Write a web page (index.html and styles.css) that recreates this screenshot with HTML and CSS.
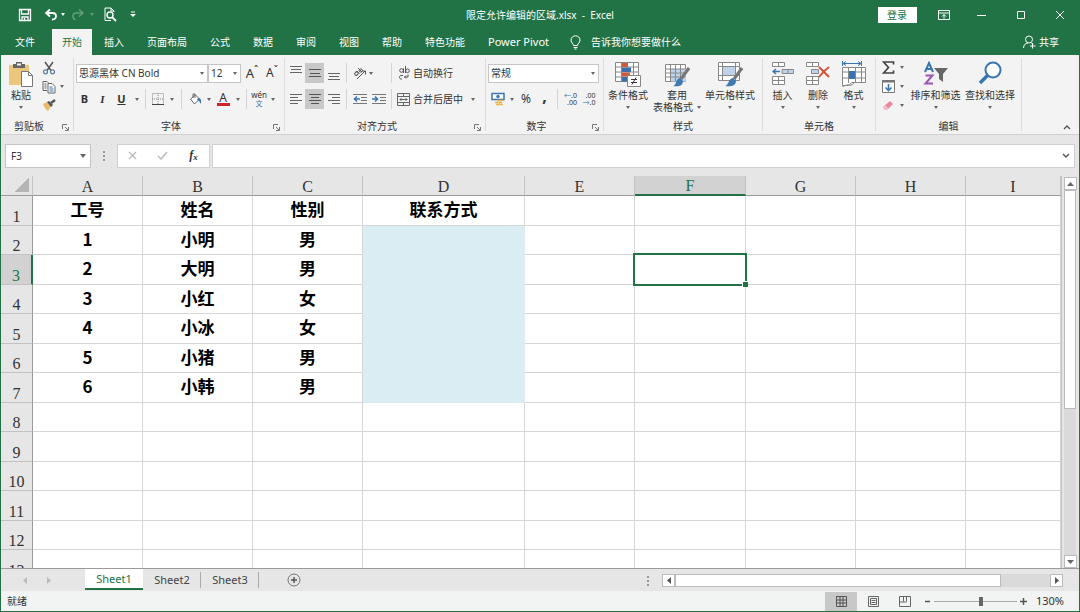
FILE: index.html
```html
<!DOCTYPE html>
<html lang="zh-CN">
<head>
<meta charset="utf-8">
<title>限定允许编辑的区域.xlsx - Excel</title>
<link rel="stylesheet" href="styles.css">
</head>
<body>
<div class="window">
  <header class="titlebar">
    <div class="quick">
      <button aria-label="保存"><svg width="14" height="14" viewBox="0 0 14 14"><path d="M1.5 1.5h11v11h-11z M3.5 1.5v4.500h7v-4.500 M4 12.500v-3.500h6v3.500 M6.500 10v2" fill="none" stroke="#fff" stroke-width="1.300"/></svg></button>
      <button aria-label="撤消"><svg width="14" height="14" viewBox="0 0 14 14"><path d="M6 1.500L2 5l4 3.500 M2 5h6.500c2 0 3.500 1 3.500 3s-1.500 3.500-4 3.500" fill="none" stroke="#fff" stroke-width="1.800"/></svg></button>
      <button class="arrow light" aria-label="撤消选项"></button>
      <button class="dim" aria-label="恢复"><svg width="14" height="14" viewBox="0 0 14 14"><path d="M8 1.500L12 5l-4 3.500 M12 5h-6.500c-2 0-3.500 1-3.500 3s1 3.500 2.500 3.500" fill="none" stroke="#fff" stroke-width="1.500"/></svg></button>
      <button class="arrow light dim" aria-label="恢复选项"></button>
      <button aria-label="打印预览"><svg width="14" height="15" viewBox="0 0 14 15"><path d="M11 5V4L8 1H2v12.500h6 M8 1v3h3" fill="none" stroke="#fff"/><circle cx="7" cy="8" r="3" fill="none" stroke="#fff" stroke-width="1.400"/><path d="M9 10l4 4" stroke="#fff" stroke-width="1.800"/></svg></button>
      <button aria-label="自定义快速访问工具栏"><svg width="6" height="7" viewBox="0 0 6 7"><path d="M1 1h4" stroke="#fff"/><path d="M0 3h6L3 6z" fill="#fff"/></svg></button>
    </div>
    <h1 class="doc">限定允许编辑的区域.xlsx&nbsp; -&nbsp; Excel</h1>
    <div class="wincontrols">
      <button class="login">登录</button>
      <button aria-label="功能区显示选项"><svg width="12" height="10" viewBox="0 0 12 10"><path d="M.500.500h11v9h-11z M.500 3h11 M6 8.500v-4 M4 6.500l2-2 2 2" fill="none" stroke="#fff"/></svg></button>
      <button aria-label="最小化"><svg width="10" height="10" viewBox="0 0 10 10"><path d="M0 5.500h9" stroke="#fff"/></svg></button>
      <button aria-label="最大化"><svg width="10" height="10" viewBox="0 0 10 10"><path d="M1.500 1.500h7v7h-7z" fill="none" stroke="#fff"/></svg></button>
      <button aria-label="关闭"><svg width="10" height="10" viewBox="0 0 10 10"><path d="M1 1l8 8M9 1l-8 8" stroke="#fff"/></svg></button>
    </div>
  </header>
  <nav class="tabs">
    <button class="file">文件</button><button class="active">开始</button><button>插入</button><button>页面布局</button><button>公式</button><button>数据</button><button>审阅</button><button>视图</button><button>帮助</button><button>特色功能</button><button class="latin">Power Pivot</button>
    <button class="tell"><svg width="11" height="15" viewBox="0 0 11 15"><path d="M3.500 10.500C3.500 8.500 1 8 1 5a4.500 4.200 0 0 1 9 0c0 3-2.500 3.500-2.500 5.500z M3.500 12.500h4 M4.500 14h2" fill="none" stroke="#fff"/></svg>告诉我你想要做什么</button>
    <button class="share"><svg width="13" height="14" viewBox="0 0 13 14"><circle cx="6" cy="4.500" r="3.500" fill="none" stroke="#fff"/><path d="M.500 13c0-3 2-5 4.500-5 M8 7.500l2 2 M9.500 8v5.500 M7 11h5.500" fill="none" stroke="#fff"/></svg>共享</button>
  </nav>

  <section class="ribbon">
    <div class="group clipboard">
      <div class="content">
        <button class="big"><svg width="26" height="27" viewBox="0 0 26 27"><path d="M1 4h20v20H1z" fill="#ecc67c"/><path d="M5 3h3V1h6v2h3v4H5z" fill="#666"/><path d="M9 2.500h4v2H9z" fill="#f3f3f3"/><path d="M13.500 10.500h7l4 4v11h-11z" fill="#fff" stroke="#777"/><path d="M20.500 10.500v4h4" fill="none" stroke="#777"/></svg><span>粘贴</span><i class="arrow"></i></button>
        <div class="stack">
          <button aria-label="剪切"><svg width="14" height="14" viewBox="0 0 14 14"><path d="M3 1l6 8.500M11 1L5 9.500" stroke="#555" stroke-width="1.500"/><circle cx="3.500" cy="10.800" r="2" fill="none" stroke="#5b7f9f" stroke-width="1.200"/><circle cx="10.500" cy="10.800" r="2" fill="none" stroke="#5b7f9f" stroke-width="1.200"/></svg></button><span></span>
          <button aria-label="复制"><svg width="14" height="14" viewBox="0 0 14 14"><path d="M5 10.500H1V1.500h4l2 2M2.500 4h2M2.500 6h2M2.500 8h2" fill="none" stroke="#666"/><path d="M6 3.500h4l3 3v6.500H6z" fill="#fff" stroke="#666"/><path d="M7.500 7h3M7.500 9h4M7.500 11h4" stroke="#3975b0"/></svg></button><button class="arrow" aria-label="复制选项"></button>
          <button aria-label="格式刷"><svg width="14" height="13" viewBox="0 0 14 13"><path d="M1 5l4-2 4 4-3 5C4 11 2 8 1 5z" fill="#ebba68"/><path d="M5 3l2-1 4 4-2 2z" fill="#555"/><path d="M9 4l4-3" stroke="#555" stroke-width="2.500"/></svg></button><span></span>
        </div>
      </div>
      <div class="label"><span>剪贴板</span><button class="launch" aria-label="剪贴板设置"><svg width="7" height="7" viewBox="0 0 7 7"><path d="M.500 5V.500H5M3 3l3 3M6.500 3v3.500H3" fill="none" stroke="#777"/></svg></button></div>
    </div>

    <div class="group font">
      <div class="content rows">
        <div class="row one">
          <span class="select"><select aria-label="字体"><option>思源黑体 CN Bold</option></select></span>
          <span class="select"><select aria-label="字号"><option>12</option></select></span>
          <button class="grow" aria-label="增大字号"><span>A</span><sup>ˆ</sup></button>
          <button class="shrink" aria-label="减小字号"><span>A</span><sup>ˇ</sup></button>
        </div>
        <div class="row two">
          <button><b>B</b></button><button class="ital">I</button><button><u>U</u></button><button class="arrow" aria-label="下划线选项"></button><i class="sep"></i>
          <button aria-label="边框"><svg width="12" height="12" viewBox="0 0 12 12"><path d="M.500.500h11v11h-11z M6 0v12M0 6h12" fill="none" stroke="#888" stroke-dasharray="1 1"/><path d="M0 11.500h12" stroke="#444"/></svg></button><button class="arrow" aria-label="边框选项"></button><i class="sep"></i>
          <button aria-label="填充颜色"><svg width="13" height="12" viewBox="0 0 13 12"><path d="M1.500 6l5-4 4 4-5 5z" fill="#fff" stroke="#666"/><path d="M4 5V1h2v4" fill="none" stroke="#666"/><path d="M9 5c3 0 4 3 2.500 6C11 9 10 7 8 7z" fill="#3975b0"/></svg></button><button class="arrow" aria-label="填充选项"></button>
          <button class="fontcolor" aria-label="字体颜色">A</button><button class="arrow" aria-label="颜色选项"></button><i class="sep"></i>
          <button class="pinyin"><span>wén</span><span class="wen">文</span></button><button class="arrow" aria-label="拼音选项"></button>
        </div>
      </div>
      <div class="label"><span>字体</span><button class="launch" aria-label="字体设置"><svg width="7" height="7" viewBox="0 0 7 7"><path d="M.500 5V.500H5M3 3l3 3M6.500 3v3.500H3" fill="none" stroke="#777"/></svg></button></div>
    </div>

    <div class="group align">
      <div class="content rows">
        <div class="row">
          <button class="up" aria-label="顶端对齐"><svg width="12" height="12" viewBox="0 0 12 12"><path d="M0 1.500h12M1 4.500h10M0 7.500h12" stroke="#666"/></svg></button>
          <button class="on" aria-label="垂直居中"><svg width="12" height="12" viewBox="0 0 12 12"><path d="M0 2.500h12M1 6.500h10M0 9.500h12" stroke="#555"/></svg></button>
          <button class="down" aria-label="底端对齐"><svg width="12" height="12" viewBox="0 0 12 12"><path d="M0 4.500h12M1 7.500h10M0 10.500h12" stroke="#666"/></svg></button><i class="sep"></i>
          <button aria-label="方向"><svg width="14" height="13" viewBox="0 0 14 13"><g fill="none" stroke="#555"><ellipse cx="3.500" cy="6.500" rx="2" ry="1.500" transform="rotate(-45 3.500 6.500)"/><path d="M3.500 4l3 3M5 1l4 4"/><circle cx="7.800" cy="3.500" r="1.600"/><path d="M4 12l8-8M9 4h3.500v3.500"/></g></svg></button><button class="arrow start" aria-label="方向选项"></button><i class="sep"></i>
          <button class="wide"><svg width="14" height="14" viewBox="0 0 14 14"><g fill="none" stroke="#555"><circle cx="4.500" cy="4.500" r="1.800"/><path d="M6.500 2.500v4.500M8.500 0v7M6 9.500H4c-2 0-2 3.500 0 3.500h1M11 8.500v2.500H7.500M9 9.500L7.500 11 9 12.500"/><circle cx="10.500" cy="4.800" r="1.800"/></g></svg>自动换行</button>
        </div>
        <div class="row">
          <button aria-label="左对齐"><svg width="12" height="12" viewBox="0 0 12 12"><path d="M0 1.500h12M0 4.500h8M0 7.500h12M0 10.500h8" stroke="#666"/></svg></button>
          <button class="on" aria-label="居中"><svg width="12" height="12" viewBox="0 0 12 12"><path d="M0 1.500h12M2 4.500h8M0 7.500h12M2 10.500h8" stroke="#555"/></svg></button>
          <button aria-label="右对齐"><svg width="12" height="12" viewBox="0 0 12 12"><path d="M0 1.500h12M4 4.500h8M0 7.500h12M4 10.500h8" stroke="#666"/></svg></button><i class="sep"></i>
          <button aria-label="减少缩进"><svg width="14" height="12" viewBox="0 0 14 12"><path d="M0 1.500h14M8 4.500h6M8 7.500h6M0 10.500h14" stroke="#777"/><path d="M1 6h6M4 3.500L1.500 6 4 8.500" fill="none" stroke="#3975b0" stroke-width="1.500"/></svg></button>
          <button aria-label="增加缩进"><svg width="14" height="12" viewBox="0 0 14 12"><path d="M0 1.500h14M8 4.500h6M8 7.500h6M0 10.500h14" stroke="#777"/><path d="M0 6h6M3 3.500L5.500 6 3 8.500" fill="none" stroke="#3975b0" stroke-width="1.500"/></svg></button><i class="sep"></i>
          <span class="split"><button class="wide"><svg width="14" height="13" viewBox="0 0 14 13"><path d="M.500.500h12v12H.500z M.500 3.500h12M.500 9.500h12M6.500.500v3M6.500 9.500v3 M3 6.500h7M4.500 5L3 6.500 4.500 8M8.500 5L10 6.500 8.500 8" fill="none" stroke="#666"/></svg>合并后居中</button><button class="arrow" aria-label="合并选项"></button></span>
        </div>
      </div>
      <div class="label"><span>对齐方式</span><button class="launch" aria-label="对齐设置"><svg width="7" height="7" viewBox="0 0 7 7"><path d="M.500 5V.500H5M3 3l3 3M6.500 3v3.500H3" fill="none" stroke="#777"/></svg></button></div>
    </div>

    <div class="group number">
      <div class="content rows">
        <div class="row one"><span class="select"><select aria-label="数字格式"><option>常规</option></select></span></div>
        <div class="row two">
          <button aria-label="会计数字格式"><svg width="14" height="14" viewBox="0 0 14 14"><path d="M1 1.500h12v6H1z" fill="#fff" stroke="#3975b0" stroke-width="1.500"/><circle cx="7" cy="4.500" r="1.700" fill="#3975b0"/><path d="M6 8.500h7M4 10.500h7M5 12.500h7" stroke="#e9b54f" stroke-width="1.600"/></svg></button><button class="arrow" aria-label="货币选项"></button>
          <button class="pct">%</button><button class="comma">,</button><i class="sep"></i>
          <button class="dec" aria-label="增加小数位数"><span><em>←</em>.0</span><span>.00</span></button><button class="dec" aria-label="减少小数位数"><span>.00</span><span><em>→</em>.0</span></button>
        </div>
      </div>
      <div class="label"><span>数字</span><button class="launch" aria-label="数字设置"><svg width="7" height="7" viewBox="0 0 7 7"><path d="M.500 5V.500H5M3 3l3 3M6.500 3v3.500H3" fill="none" stroke="#777"/></svg></button></div>
    </div>

    <div class="group styles">
      <div class="content">
        <button class="big"><svg width="26" height="27" viewBox="0 0 26 27"><path d="M.500 1.500h23v19H.500z M.500 6h23M.500 11h23M.500 16h23M6.500 1v19M18.500 1v19" fill="#fff" stroke="#888"/><path d="M7 2h6v4H7zM7 11.500h8v4H7z" fill="#d0593d"/><path d="M7 6.500h9v4.500H7zM7 16h5v4.500H7z" fill="#3f6faa"/><path d="M12.500 14.500h13v11h-13z" fill="#fff" stroke="#888"/><path d="M16 18.500h6M16 21.500h6M21 16.500l-4 7" stroke="#333"/></svg><span>条件格式</span><i class="arrow"></i></button>
        <button class="big"><svg width="26" height="27" viewBox="0 0 26 27"><path d="M1.500 3.500h20v17h-20z" fill="#fff" stroke="#888"/><path d="M7 8h15v12.500H7z" fill="#bed3ea"/><path d="M1.500 8h20M1.500 12h20M1.500 16h20M6.500 3v17M11.500 3v17M16.500 3v17" stroke="#888"/><path d="M25 7L17 18" stroke="#777" stroke-width="3"/><path d="M9 25c4-1 2-7 7-8l3 3c0 5-5 6-10 5z" fill="#3f7ab5"/></svg><span>套用</span><span class="inline">表格格式 <i class="arrow"></i></span></button>
        <button class="big"><svg width="26" height="27" viewBox="0 0 26 27"><path d="M1.500 1.500h21v18h-21z" fill="#fff" stroke="#888"/><path d="M6 6h12v8H6z" fill="#bed3ea"/><path d="M1.500 5.500h21M1.500 14.500h21M5.500 1v18M18.500 1v18" stroke="#888"/><path d="M25 7L17 18" stroke="#777" stroke-width="3"/><path d="M8 25c4-1 3-7 8-8l3 3c0 5-6 6-11 5z" fill="#3f7ab5"/></svg><span>单元格样式</span><i class="arrow"></i></button>
      </div>
      <div class="label"><span>样式</span></div>
    </div>

    <div class="group cells">
      <div class="content">
        <button class="big"><svg width="24" height="27" viewBox="0 0 24 27"><path d="M1.500 1.500h12v4h-12zM7.500 1.500v4M1.500 15.500h12v8h-12zM7.500 15.500v8M1.500 19.500h12" fill="#fff" stroke="#888"/><path d="M11 8.500h11.500v4H11zM17 8.500v4" fill="#bed3ea" stroke="#888"/><path d="M2 10.500h7M5 8l-3 2.500L5 13" fill="none" stroke="#3975b0" stroke-width="1.300"/></svg><span>插入</span><i class="arrow"></i></button>
        <button class="big"><svg width="26" height="27" viewBox="0 0 26 27"><path d="M1.500 1.500h12v4h-12zM7.500 1.500v4M1.500 15.500h12v8h-12zM7.500 15.500v8M1.500 19.500h12" fill="#fff" stroke="#888"/><path d="M6.500 8.500h7v4h-7z" fill="#bed3ea" stroke="#888"/><path d="M14 6l10 10M24 6c-4 3-7 6-10 10" fill="none" stroke="#d2533a" stroke-width="2"/></svg><span>删除</span><i class="arrow"></i></button>
        <button class="big"><svg width="26" height="27" viewBox="0 0 26 27"><path d="M1.500 0v5M20.500 0v5M3 2.500h16M5 .500l-3 2 3 2M17 .500l3 2-3 2" fill="none" stroke="#3975b0"/><path d="M1.500 6.500h23v15H11l-4 3H1.500z M1.500 11h23M1.500 17h23M7.500 6v16M14.500 6v16M20.500 6v16" fill="#fff" stroke="#888"/><path d="M8 10h6v8H8z" fill="#3975b0"/><path d="M1 25c3 1 4-2 7-1s4-1 5-2" fill="none" stroke="#888"/></svg><span>格式</span><i class="arrow"></i></button>
      </div>
      <div class="label"><span>单元格</span></div>
    </div>

    <div class="group edit">
      <div class="content">
        <div class="stack">
          <button aria-label="自动求和"><svg width="13" height="13" viewBox="0 0 13 13"><path d="M11.500 3.500V1H1.500l5 5.500-5 5.500h10V9.500" fill="none" stroke="#444" stroke-width="1.700"/></svg></button><button class="arrow" aria-label="求和选项"></button>
          <button aria-label="填充"><svg width="13" height="13" viewBox="0 0 13 13"><path d="M.500.500h12v12H.500z" fill="#fff" stroke="#777"/><path d="M0 1.500h13" stroke="#777" stroke-width="2"/><path d="M6.500 4v6M3.500 7.500l3 3 3-3" fill="none" stroke="#3975b0" stroke-width="1.600"/></svg></button><button class="arrow" aria-label="填充选项"></button>
          <button aria-label="清除"><svg width="13" height="11" viewBox="0 0 13 11"><path d="M1 7l7-6 3 3-6 6H3z" fill="#e8899b"/><path d="M1 7l2-2 3.500 3.500L5 10H3z" fill="#f4bdc6"/></svg></button><button class="arrow" aria-label="清除选项"></button>
        </div>
        <button class="big"><svg width="26" height="27" viewBox="0 0 26 27"><g fill="none" stroke-width="2"><path d="M2 11L6 2l4 9M3.500 8h5" stroke="#3975b0"/><path d="M2.500 14.500h7l-7 8h7.500" stroke="#9a55b5"/></g><path d="M11 7h14l-5 6v8l-4-3v-5z" fill="#666"/></svg><span>排序和筛选</span><i class="arrow"></i></button>
        <button class="big"><svg width="26" height="27" viewBox="0 0 26 27"><circle cx="16" cy="9" r="7.500" fill="#fff" stroke="#3975b0" stroke-width="2"/><path d="M10.500 14.500L3 22" stroke="#3975b0" stroke-width="3.500"/></svg><span>查找和选择</span><i class="arrow"></i></button>
      </div>
      <div class="label"><span>编辑</span></div>
    </div>
    <button class="collapse" aria-label="折叠功能区"><svg width="8" height="6" viewBox="0 0 8 6"><path d="M1 5l3-3 3 3" fill="none" stroke="#555" stroke-width="1.400"/></svg></button>
  </section>

  <section class="formula">
    <span class="select namebox"><input aria-label="名称框" value="F3"></span>
    <i class="dots"></i>
    <div class="fx">
      <button aria-label="取消"><svg width="9" height="9" viewBox="0 0 9 9"><path d="M1 1l7 7M8 1L1 8" stroke="#bbb" stroke-width="1.300"/></svg></button>
      <button aria-label="输入"><svg width="11" height="9" viewBox="0 0 11 9"><path d="M1 5l3 3 6-7" fill="none" stroke="#bbb" stroke-width="1.500"/></svg></button>
      <button class="fxb">f<sub>x</sub></button>
    </div>
    <div class="fbar"><input aria-label="编辑栏"><button aria-label="展开编辑栏"><svg width="8" height="6" viewBox="0 0 8 6"><path d="M1 1l3 3 3-3" fill="none" stroke="#555" stroke-width="1.400"/></svg></button></div>
  </section>

  <main class="sheet">
    <div class="cellsarea">
      <table>
        <colgroup><col class="h"><col class="n"><col class="n"><col class="n"><col class="d"><col class="n"><col class="f"><col class="n"><col class="n"><col></colgroup>
        <thead><tr><th class="corner"></th><th>A</th><th>B</th><th>C</th><th>D</th><th>E</th><th class="cur">F</th><th>G</th><th>H</th><th>I</th></tr></thead>
        <tbody>
          <tr><th>1</th><td>工号</td><td>姓名</td><td>性别</td><td>联系方式</td><td></td><td></td><td></td><td></td><td></td></tr>
          <tr><th>2</th><td>1</td><td>小明</td><td>男</td><td class="fill"></td><td></td><td></td><td></td><td></td><td></td></tr>
          <tr><th class="cur">3</th><td>2</td><td>大明</td><td>男</td><td class="fill"></td><td></td><td class="picked"></td><td></td><td></td><td></td></tr>
          <tr><th>4</th><td>3</td><td>小红</td><td>女</td><td class="fill"></td><td></td><td></td><td></td><td></td><td></td></tr>
          <tr><th>5</th><td>4</td><td>小冰</td><td>女</td><td class="fill"></td><td></td><td></td><td></td><td></td><td></td></tr>
          <tr><th>6</th><td>5</td><td>小猪</td><td>男</td><td class="fill"></td><td></td><td></td><td></td><td></td><td></td></tr>
          <tr><th>7</th><td>6</td><td>小韩</td><td>男</td><td class="fill"></td><td></td><td></td><td></td><td></td><td></td></tr>
          <tr><th>8</th><td></td><td></td><td></td><td></td><td></td><td></td><td></td><td></td><td></td></tr>
          <tr><th>9</th><td></td><td></td><td></td><td></td><td></td><td></td><td></td><td></td><td></td></tr>
          <tr><th>10</th><td></td><td></td><td></td><td></td><td></td><td></td><td></td><td></td><td></td></tr>
          <tr><th>11</th><td></td><td></td><td></td><td></td><td></td><td></td><td></td><td></td><td></td></tr>
          <tr><th>12</th><td></td><td></td><td></td><td></td><td></td><td></td><td></td><td></td><td></td></tr>
          <tr><th>13</th><td></td><td></td><td></td><td></td><td></td><td></td><td></td><td></td><td></td></tr>
        </tbody>
      </table>
    </div>
    <div class="vscroll">
      <button aria-label="向上滚动"><svg width="7" height="4" viewBox="0 0 7 4"><path d="M0 4h7L3.500 0z" fill="#666"/></svg></button>
      <div class="thumb"></div><div class="track"></div>
      <button aria-label="向下滚动"><svg width="7" height="4" viewBox="0 0 7 4"><path d="M0 0h7L3.500 4z" fill="#666"/></svg></button>
    </div>
  </main>

  <footer class="sheetbar">
    <div class="navs"><button aria-label="上一张"><svg width="4" height="7" viewBox="0 0 4 7"><path d="M4 0v7L0 3.500z" fill="#bbb"/></svg></button><button aria-label="下一张"><svg width="4" height="7" viewBox="0 0 4 7"><path d="M0 0v7l4-3.500z" fill="#bbb"/></svg></button></div>
    <button class="st active">Sheet1</button><button class="st">Sheet2</button><button class="st">Sheet3</button>
    <button class="add" aria-label="新工作表"><svg width="14" height="14" viewBox="0 0 14 14"><circle cx="7" cy="7" r="6" fill="none" stroke="#777"/><path d="M7 4v6M4 7h6" stroke="#555" stroke-width="1.500"/></svg></button>
    <i class="dots"></i>
    <div class="hscroll">
      <button aria-label="向左滚动"><svg width="4" height="7" viewBox="0 0 4 7"><path d="M4 0v7L0 3.500z" fill="#555"/></svg></button>
      <div class="thumb"></div><div class="track"></div>
      <button aria-label="向右滚动"><svg width="4" height="7" viewBox="0 0 4 7"><path d="M0 0v7l4-3.500z" fill="#555"/></svg></button>
    </div>
  </footer>
  <footer class="status">
    <span class="ready">就绪</span>
    <button class="on" aria-label="普通"><svg width="11" height="11" viewBox="0 0 11 11"><path d="M.500.500h10v10H.500z M.500 4h10M.500 7h10M4 .500v10M7 .500v10" fill="none" stroke="#555"/></svg></button>
    <button aria-label="页面布局"><svg width="11" height="11" viewBox="0 0 11 11"><path d="M.500.500h10v10H.500z M2.500 2.500h6v6h-6z M3.500 4.500h4M3.500 6.500h4" fill="none" stroke="#666"/></svg></button>
    <button aria-label="分页预览"><svg width="12" height="11" viewBox="0 0 12 11"><path d="M.500.500h11v10H.500z M4.500.500v5M7.500.500v5M.500 6h7" fill="none" stroke="#666"/></svg></button>
    <button class="sm" aria-label="缩小"><svg width="7" height="7" viewBox="0 0 7 7"><path d="M1 3.500h5" stroke="#555" stroke-width="1.500"/></svg></button>
    <input type="range" min="10" max="220" value="130" aria-label="显示比例">
    <button class="sm" aria-label="放大"><svg width="7" height="7" viewBox="0 0 7 7"><path d="M0 3.500h7M3.500 0v7" stroke="#555" stroke-width="1.500"/></svg></button>
    <button class="zoom">130%</button>
  </footer>
</div>
</body>
</html>
```
FILE: styles.css
```css
* { box-sizing: border-box; }
body {
  margin: 0;
  font: 10px/14px "Noto Sans", "Noto Sans CJK SC", sans-serif;
  color: #333;
}
button, input, select { font: inherit; color: inherit; }
button {
  display: flex;
  align-items: center;
  justify-content: center;
  padding: 0;
  border: 0;
  background: none;
  white-space: nowrap;
}
svg { display: block; flex: none; }
i { font-style: normal; }

.window {
  display: flex;
  flex-direction: column;
  height: 100vh;
  border: solid #217346;
  border-width: 0 1px 1px;
  background: #e6e6e6;
  overflow: hidden;
}

.arrow::before {
  content: "";
  display: block;
  border: solid transparent;
  border-width: 3px 2px 0;
  border-top-color: #666;
}
.arrow.light::before { border-top-color: #fff; }
.dim { opacity: 0.3; }

/* Title bar */
.titlebar {
  display: grid;
  grid-template-columns: 1fr auto 1fr;
  align-items: center;
  height: 29px;
  background: #217346;
  color: #fff;
}
.quick {
  display: grid;
  grid-template-columns: 34px 18px 6px 24px 4px 32px 14px;
  justify-items: center;
  align-items: center;
  padding-left: 7px;
}
.doc { margin: 0; font-size: 10px; font-weight: 400; }
.wincontrols {
  display: grid;
  grid-template-columns: 40px 38px 38px 39px 39px;
  justify-content: end;
  justify-items: center;
  align-items: center;
}
.wincontrols .login {
  width: 39px;
  height: 16px;
  margin-right: 16px;
  background: #fff;
  color: #217346;
}

/* Ribbon tabs */
.tabs {
  display: flex;
  gap: 1px;
  height: 26px;
  background: #217346;
  color: #fff;
}
.tabs button { padding: 0 11px; }
.tabs .file { padding: 0 16px 0 14px; }
.tabs .active { padding: 0 10px; background: #f3f3f3; color: #217346; }
.tabs .latin { font-size: 11px; }
.tabs .tell { gap: 10px; padding-left: 9px; }
.tabs .share { gap: 3px; margin-left: auto; padding-right: 20px; }

/* Ribbon */
.ribbon {
  display: flex;
  height: 80px;
  padding: 3px 0;
  background: #f3f3f3;
  border-bottom: 1px solid #d0d0d0;
}
.group {
  display: flex;
  flex-direction: column;
  border-right: 1px solid #dcdcdc;
}
.content { display: grid; flex: 1; align-content: start; padding-top: 3px; }
.label { display: flex; height: 12px; }
.label span { flex: 1; text-align: center; }
.launch { width: 16px; padding-top: 4px; }
.clipboard { width: 73px; }
.font { width: 211px; }
.align { width: 201px; }
.number { width: 118px; }
.styles { width: 159px; }
.cells { width: 113px; }
.edit { width: 146px; }

.big { flex-direction: column; justify-content: flex-start; line-height: 12px; }
.big svg { margin-bottom: 1px; }
.big .arrow { margin-top: 5px; }
.big .inline { display: flex; align-items: center; gap: 4px; }
.big .inline .arrow { margin-top: 0; }
.stack {
  display: grid;
  grid-template-rows: repeat(3, 19px);
  align-items: center;
  justify-items: center;
}
.clipboard .content { grid-template-columns: 40px 26px; }
.clipboard .stack { grid-template-columns: 16px 10px; margin-top: -3px; }
.styles .content { grid-template-columns: 48px 50px 56px; }
.cells .content { grid-template-columns: 35px 36px 35px; padding-left: 2px; }
.edit .content { grid-template-columns: 33px 53px 56px; }
.edit .stack { grid-template-columns: 24px 4px; margin-top: -3px; }

.rows { gap: 6px; padding-top: 5px; }
.row {
  display: grid;
  grid-auto-flow: column;
  align-items: center;
  justify-items: center;
  height: 20px;
}
.font .content, .number .content { padding-left: 2px; }
.font .one { grid-template-columns: 132px 33px 22px 18px; }
.font .two { grid-template-columns: 17px 19px 19px 11px 6px 19px 10px 9px 18px 9px 20px 9px 8px 18px 10px; }
.align .content { padding-left: 2px; }
.align .row { grid-template-columns: 18px 19px 19px 7px 19px 19px 6px auto; justify-content: start; }
.number .one { grid-template-columns: 111px; }
.number .two { grid-template-columns: 19px 9px 20px 17px 8px 19px 18px; }
.sep { width: 1px; height: 20px; background: #d4d4d4; }
.start { justify-self: start; }
.on { width: 19px; height: 20px; background: #c8c8c8; }
.up { margin-bottom: 4px; }
.down { margin-top: 4px; }
.wide { gap: 2px; padding-left: 3px; }
.align .row > .wide { justify-self: start; }
.split { display: flex; gap: 8px; }

.select { position: relative; display: flex; width: 100%; height: 19px; }
.select::after {
  content: "";
  position: absolute;
  right: 4px;
  top: 8px;
  border: solid transparent;
  border-width: 3px 2px 0;
  border-top-color: #666;
  pointer-events: none;
}
.select select, .select input {
  width: 100%;
  min-width: 0;
  padding: 0 2px;
  border: 1px solid #c6c6c6;
  border-radius: 0;
  background: #fff;
  appearance: none;
}
.row b, .row u { font-size: 11px; font-weight: 700; }
.ital { font: italic 700 11px "Liberation Serif", serif; }
.grow { font-size: 13px; }
.shrink { font-size: 12px; }
.row sup { font-size: 10px; line-height: 1; margin-bottom: 6px; }
.fontcolor {
  height: 13px;
  width: 13px;
  border-bottom: 3px solid #d2232a;
  font-size: 12px;
  line-height: 10px;
}
.pinyin { flex-direction: column; font-size: 8px; line-height: 9px; }
.pinyin .wen { color: #3975b0; font-size: 7px; }
.pct { font-size: 12px; }
.comma { font-size: 16px; font-weight: 700; padding-bottom: 6px; }
.dec { flex-direction: column; align-items: flex-end; font-size: 7px; line-height: 7px; }
.dec em { font-style: normal; color: #3975b0; }
.collapse { align-self: flex-end; margin-left: auto; padding: 0 8px 1px; }

/* Formula bar */
.formula {
  display: flex;
  align-items: center;
  height: 41px;
  padding: 0 4px;
}
.formula .select { width: 86px; height: 24px; }
.formula .select::after { right: 5px; top: 10px; border-width: 4px 3px 0; }
.formula .select input { padding: 0 5px; }
.dots { width: 2px; height: 10px; background: repeating-linear-gradient(#999 0 2px, transparent 2px 4px); }
.formula .dots { margin: 0 12px; }
.fx {
  display: grid;
  grid-template-columns: 29px 31px 31px;
  height: 24px;
  margin-right: 2px;
  border: 1px solid #d0d0d0;
  background: #fff;
}
.fxb { font: italic 700 12px "Liberation Serif", serif; }
.fxb sub { font-size: 9px; line-height: 1; margin-top: 3px; }
.fbar { display: flex; flex: 1; height: 24px; border: 1px solid #d0d0d0; background: #fff; }
.fbar input { flex: 1; min-width: 0; border: 0; background: none; }
.fbar button { width: 16px; }

/* Worksheet */
.sheet { display: flex; flex: 1; min-height: 0; border-bottom: 1px solid #9a9a9a; }
.cellsarea { flex: 1; min-width: 0; overflow: hidden; }
table { width: 100%; table-layout: fixed; border-collapse: separate; border-spacing: 0; }
.h { width: 32px; }
.n { width: 110px; }
.d { width: 162px; }
.f { width: 111px; }
th {
  padding: 0;
  background: #e6e6e6;
  font: 400 16px/16px "Liberation Serif", serif;
  color: #333;
}
thead th { height: 20px; border-right: 1px solid #c2c2c2; border-bottom: 1px solid #9a9a9a; vertical-align: bottom; }
tbody th { border-right: 1px solid #9a9a9a; border-bottom: 1px solid #c2c2c2; vertical-align: bottom; }
thead .cur { background: #d2d2d2; border-bottom: 2px solid #217346; color: #217346; }
tbody .cur { background: #d2d2d2; border-right: 2px solid #217346; color: #217346; }
.corner { background: linear-gradient(135deg, #e6e6e6 50%, #b5b5b5 50%) 14px 2px / 14px 14px no-repeat #e6e6e6; }
tbody tr { height: 30px; }
tbody tr:nth-child(even) { height: 29px; }
td {
  padding: 0 0 3px;
  border-right: 1px solid #d6d6d6;
  border-bottom: 1px solid #d6d6d6;
  background: #fff;
  font: 700 17px/24px "Noto Sans CJK SC", sans-serif;
  text-align: center;
  color: #000;
}
.fill { background: #daedf3; border-color: #daedf3; }
.picked { position: relative; }
.picked::after { content: ""; position: absolute; inset: -2px; border: 2px solid #217346; }
.picked::before {
  content: "";
  position: absolute;
  z-index: 1;
  right: -3px;
  bottom: -3px;
  width: 5px;
  height: 5px;
  border: solid #fff;
  border-width: 1px 0 0 1px;
  background: #217346;
}
.vscroll { display: flex; flex-direction: column; width: 18px; padding: 1px 3px 0 2px; border-left: 1px solid #c2c2c2; }
.vscroll button, .hscroll button { flex: none; width: 13px; height: 13px; border: 1px solid #bcbcbc; background: #fff; }
.thumb { border: 1px solid #bcbcbc; background: #fff; }
.track { background: #dadada; }
.vscroll .thumb { flex: 219; }
.vscroll .track { flex: 148; }

/* Sheet tabs */
.sheetbar { display: flex; height: 22px; color: #444; }
.navs { display: flex; gap: 20px; width: 84px; padding-left: 22px; }
.st { position: relative; width: 58px; height: 21px; font-size: 11px; }
.st:not(.active)::after { content: ""; position: absolute; right: 0; top: 3px; height: 16px; border-right: 1px solid #aaa; }
.st.active { width: 58px; background: #fff; border-bottom: 2px solid #217346; color: #217346; }
.add { margin-left: 28px; }
.sheetbar .dots { margin: 7px 13px 0 auto; }
.hscroll { display: flex; flex: 0 1 401px; margin: 5px 16px 0 0; height: 13px; }
.hscroll .thumb { flex: 327; }
.hscroll .track { flex: 49; }

/* Status bar */
.status { display: flex; align-items: center; height: 20px; background: #f1f4f2; }
.status > button { width: 32px; height: 19px; }
.ready { flex: 1; padding-left: 6px; }
.status .sm { width: 13px; }
.status .zoom { width: 40px; margin-right: 9px; font-size: 11px; }
.status input {
  width: 83px;
  height: 12px;
  margin: 0;
  appearance: none;
  background: linear-gradient(#aaa, #aaa) center / 100% 1px no-repeat;
}
.status input::-webkit-slider-thumb { appearance: none; width: 4px; height: 9px; background: #666; }
```
